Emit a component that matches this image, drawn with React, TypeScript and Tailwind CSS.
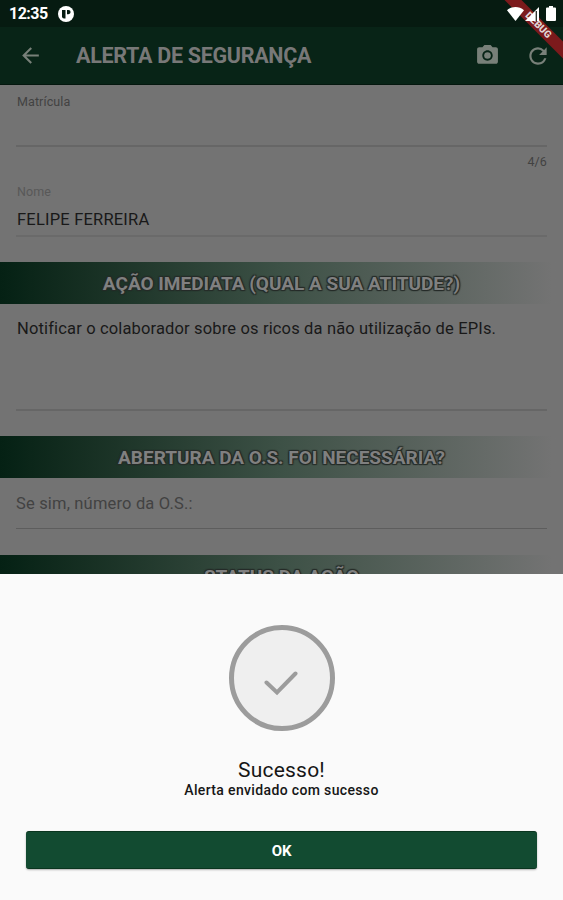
import type { ReactNode } from 'react';
import { MdArrowBack, MdCameraAlt, MdRefresh } from 'react-icons/md';

interface SectionBannerProps {
  children: ReactNode;
}

function SectionBanner({ children }: SectionBannerProps) {
  return (
    <div className="h-[42px] shrink-0 flex items-center justify-center pt-[2px] bg-linear-to-r from-[#052114] via-[#3d5146] via-50% to-[#737373] to-98%">
      <h2 className="text-[19px] font-bold text-[#808080] whitespace-nowrap [text-shadow:-1px_-1px_1px_#252b28,1px_-1px_1px_#252b28,-1px_1px_1px_#252b28,1px_1px_1px_#252b28]">
        {children}
      </h2>
    </div>
  );
}

function StatusBar() {
  return (
    <div className="relative z-20 h-[27px] shrink-0 flex items-center pl-[9px] pr-[7px] text-white">
      <span className="w-[38px] text-[16px] leading-none font-bold tracking-[-0.5px]">12:35</span>
      <svg className="ml-[11px] w-4 h-4" viewBox="0 0 16 16">
        <circle cx="8" cy="8" r="8" fill="white" />
        <path d="M4 4h3.500v8.500H6a2 2 0 0 1-2-2Z" fill="#061b11" />
        <path d="M9 4h1.500a2 2 0 0 1 0 4.200H9Z" fill="#061b11" />
      </svg>
      <svg className="ml-auto w-[17px] h-[14px]" viewBox="0 0 17 14">
        <path d="M0 3.2C5 -1 12 -1 17 3.2L8.5 14Z" fill="white" />
      </svg>
      <svg className="ml-[1px] w-[14px] h-[14px]" viewBox="0 0 14 14">
        <path d="M14 0v14H0Z" fill="white" />
        <path d="M11.300 4v10" stroke="#252b24" strokeWidth="1.3" />
      </svg>
      <svg className="ml-[7px] w-[10px] h-[15px]" viewBox="0 0 10 15">
        <path d="M3 0h4v1.5h2a1 1 0 0 1 1 1V14a1 1 0 0 1-1 1H1a1 1 0 0 1-1-1V2.500a1 1 0 0 1 1-1h2Z" fill="white" />
      </svg>
    </div>
  );
}

function AppBar() {
  return (
    <header className="h-[58px] shrink-0 flex items-center bg-[#082417] border-b border-[#04170e] pl-[18px] pr-[12px] text-[#788079]">
      <MdArrowBack className="w-[25px] h-[25px]" />
      <h1 className="ml-[33px] pt-[2px] text-[21.500px] font-bold text-[#787878] whitespace-nowrap tracking-[-0.3px]">
        ALERTA DE SEGURANÇA
      </h1>
      <MdCameraAlt className="ml-auto w-[25px] h-[25px]" />
      <MdRefresh className="ml-[25px] w-[26px] h-[26px]" />
    </header>
  );
}

function DebugRibbon() {
  return (
    <div className="absolute z-10 top-0 right-0 w-[64px] h-[64px] overflow-hidden">
      <div className="absolute top-[20px] left-[-12px] w-[104px] h-[12px] rotate-45 bg-[#7c1a1c] text-center text-[10px] leading-[12px] font-black text-[#e0d4d4]">
        <span className="relative -left-[1px]">DEBUG</span>
      </div>
    </div>
  );
}

function AlertForm() {
  return (
    <main className="h-[489px] shrink-0 flex flex-col overflow-hidden bg-[#737373] text-[#191919]">
      <div className="mx-4 h-[62px] shrink-0 border-b-2 border-[#666666] pt-[9px] pl-px">
        <label className="block text-[12.500px] leading-[15px] tracking-[0.1px] text-[#424242]">Matrícula</label>
      </div>
      <div className="mx-4 h-[30px] shrink-0 pt-[7px] text-right text-[12.500px] leading-[15px] tracking-[0.1px] text-[#424242]">
        4/6
      </div>
      <div className="mx-4 h-[60px] shrink-0 border-b-2 border-[#6a6a6a] pt-[7px] pl-px">
        <label className="block text-[12.500px] leading-[15px] tracking-[0.1px] text-[#585858]">Nome</label>
        <p className="mt-[11px] text-[16.500px] leading-5 tracking-[0.2px]">FELIPE FERREIRA</p>
      </div>
      <div className="h-[25px] shrink-0" />
      <SectionBanner>AÇÃO IMEDIATA (QUAL A SUA ATITUDE?)</SectionBanner>
      <div className="mx-4 h-[107px] shrink-0 border-b-2 border-[#666666] pt-[15px] pl-px">
        <p className="text-[16.500px] leading-5 tracking-[0.15px] whitespace-nowrap">
          Notificar o colaborador sobre os ricos da não utilização de EPIs.
        </p>
      </div>
      <div className="h-[25px] shrink-0" />
      <SectionBanner>ABERTURA DA O.S. FOI NECESSÁRIA?</SectionBanner>
      <div className="mx-4 h-[51px] shrink-0 border-b border-[#5d5d5d] pt-[16px]">
        <label className="block text-[16.500px] leading-5 tracking-[0.17px] text-[#424242]">Se sim, número da O.S.:</label>
      </div>
      <div className="h-[26px] shrink-0" />
      <SectionBanner>STATUS DA AÇÃO</SectionBanner>
    </main>
  );
}

function SuccessSheet() {
  return (
    <section className="flex-1 flex flex-col items-center bg-[#fafafa] px-[26px] pt-[51px] text-[#161616]">
      <div className="w-[106px] h-[106px] rounded-full border-[5px] border-[#9c9c9c] bg-[#efefef] flex items-center justify-center">
        <svg className="w-[34px] h-[26px] mt-[9px] -ml-[2px]" viewBox="0 0 34 26">
          <path d="M2.500 12.500 13 22.500 31.500 3.500" fill="none" stroke="#9c9c9c" strokeWidth="4" strokeLinecap="round" />
        </svg>
      </div>
      <h2 className="mt-[27px] text-[21px] leading-6 tracking-[0.2px]">Sucesso!</h2>
      <p className="text-[14px] leading-4 font-medium tracking-[0.35px]">Alerta envidado com sucesso</p>
      <button className="mt-[33px] w-full h-[38px] rounded-[3px] bg-[#124b31] border-y border-[#0a351f] pt-[2px] text-[15px] font-bold tracking-[-0.3px] text-white shadow-[0_1px_2px_rgba(0,0,0,0.3)]">
        OK
      </button>
    </section>
  );
}

export default function App() {
  return (
    <div className="relative w-[563px] h-[900px] flex flex-col overflow-hidden bg-[#061b11] font-['Roboto',sans-serif]">
      <DebugRibbon />
      <StatusBar />
      <AppBar />
      <AlertForm />
      <SuccessSheet />
    </div>
  );
}
